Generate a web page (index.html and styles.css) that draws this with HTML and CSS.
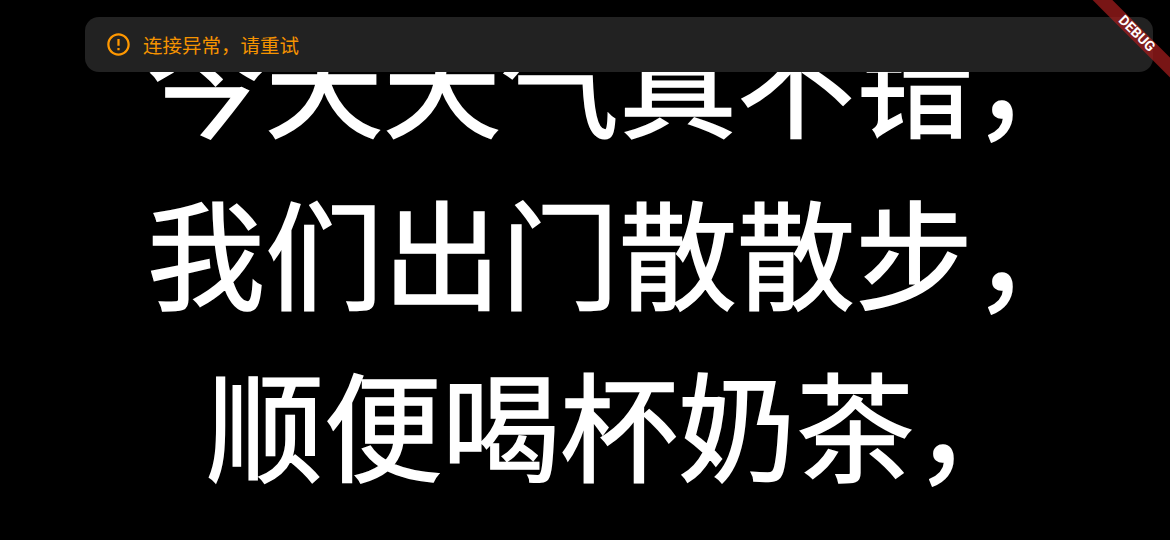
FILE: index.html
```html
<!DOCTYPE html>
<html lang="zh-CN">
<head>
<meta charset="utf-8">
<title>连接异常</title>
<link rel="stylesheet" href="styles.css">
</head>
<body>
<main class="lyrics">
  <p class="line">今天天气真不错，</p>
  <p class="line">我们出门散散步，</p>
  <p class="line">顺便喝杯奶茶，</p>
</main>
<div class="toast">
  <svg class="toast-icon" viewBox="0 0 24 24" aria-hidden="true"><path d="M11 15h2v2h-2zm0-8h2v6h-2zm.99-5C6.47 2 2 6.48 2 12s4.47 10 9.99 10C17.52 22 22 17.52 22 12S17.52 2 11.99 2zM12 20c-4.42 0-8-3.58-8-8s3.58-8 8-8 8 3.58 8 8-3.58 8-8 8z"/></svg>
  <span class="toast-text">连接异常，请重试</span>
</div>
<div class="banner">DEBUG</div>
</body>
</html>
```
FILE: styles.css
```css
html, body {
  margin: 0;
  width: 1170px;
  height: 540px;
  overflow: hidden;
  background: #000;
  font-family: "Noto Sans CJK SC", sans-serif;
}
.lyrics {
  display: flex;
  flex-direction: column;
  align-items: center;
  padding: 0 0 32px 68px;
  height: 540px;
  box-sizing: border-box;
  justify-content: flex-end;
}
.line {
  margin: 0;
  height: 172px;
  line-height: 172px;
  font-size: 118px;
  font-weight: 400;
  -webkit-text-stroke: 1.6px #fff;
  color: #fff;
  white-space: nowrap;
}
.toast {
  position: absolute;
  left: 85px;
  top: 17px;
  width: 1068px;
  height: 55px;
  border-radius: 14px;
  background: #222;
  display: flex;
  align-items: center;
  gap: 11px;
  padding-left: 20px;
  box-sizing: border-box;
}
.toast-icon {
  width: 27px;
  height: 27px;
  margin-top: -1px;
  fill: #ff9800;
  flex: none;
}
.toast-text {
  font-size: 19.5px;
  color: #f59300;
  line-height: 28px;
}
.banner {
  position: absolute;
  top: 0;
  right: 0;
  width: 140px;
  height: 14px;
  line-height: 13px;
  background: rgba(160, 28, 28, 0.75);
  color: #fff;
  font-family: Roboto, sans-serif;
  font-weight: 700;
  font-size: 14px;
  text-align: center;
  transform: translate(36.5px, 27px) rotate(45deg);
}
```
